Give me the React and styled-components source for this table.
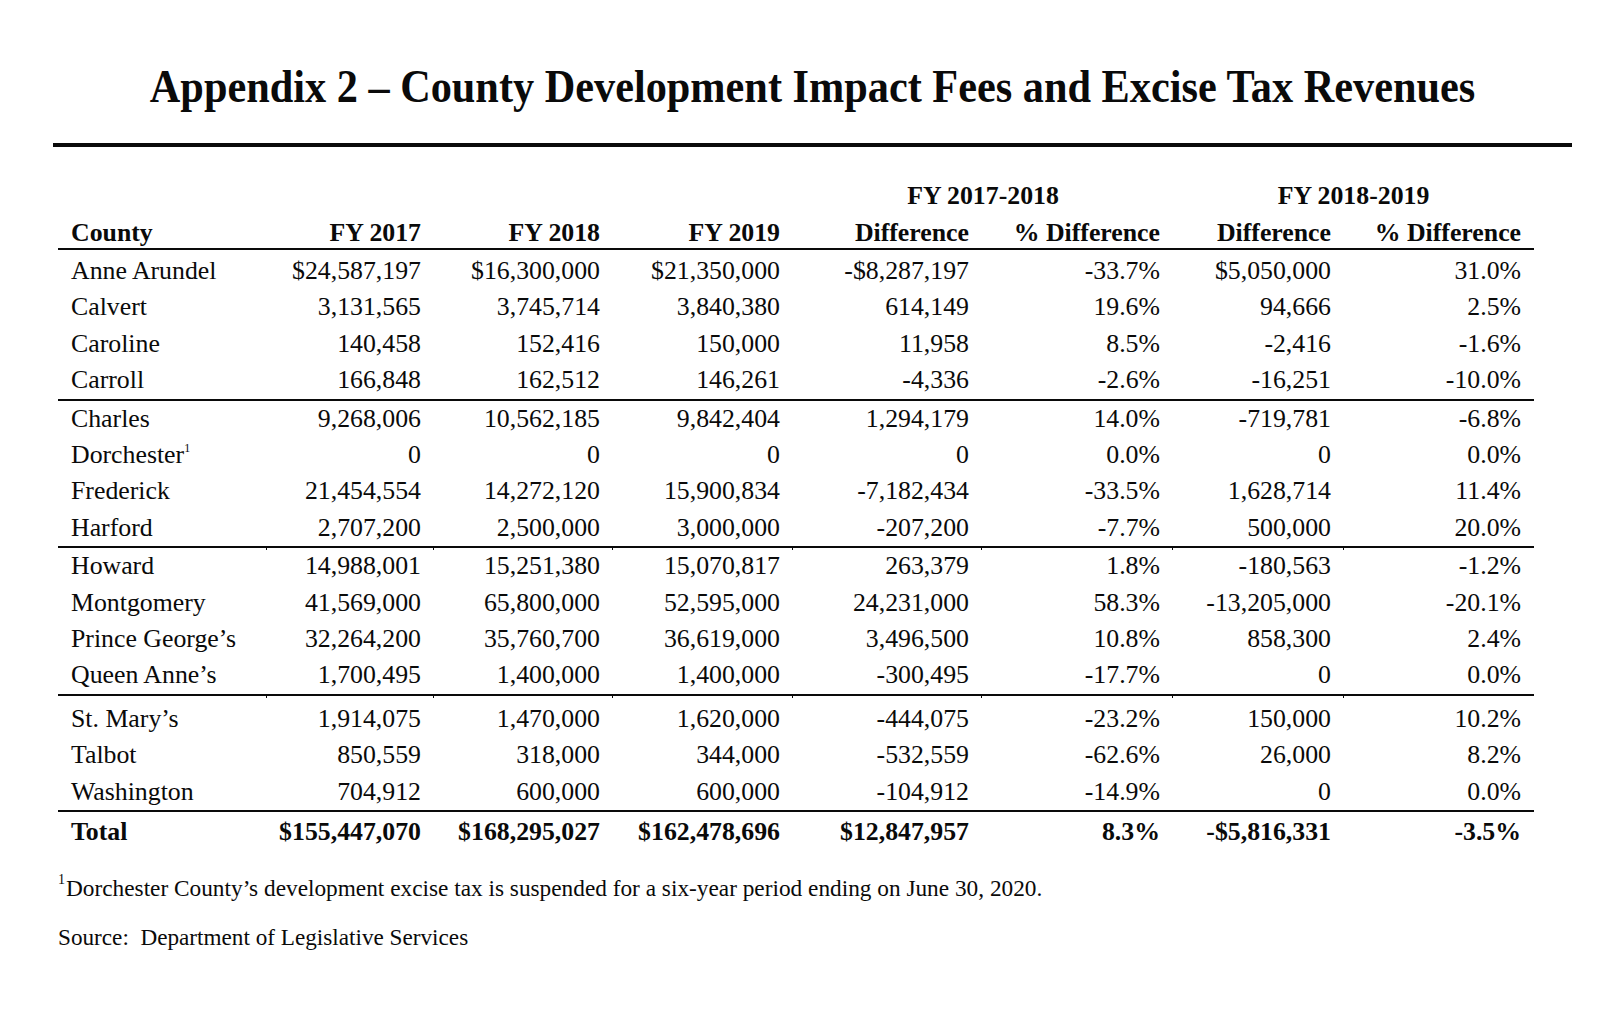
import React from 'react';
import styled, { createGlobalStyle } from 'styled-components';

const GlobalStyle = createGlobalStyle`
  html, body {
    margin: 0;
    padding: 0;
    background: #fff;
  }
  body {
    font-family: "Liberation Serif", "Times New Roman", serif;
    color: #0a0a0a;
  }
`;

const rows = [
  { county: 'Anne Arundel', v: ['$24,587,197', '$16,300,000', '$21,350,000', '-$8,287,197', '-33.7%', '$5,050,000', '31.0%'], first: true },
  { county: 'Calvert', v: ['3,131,565', '3,745,714', '3,840,380', '614,149', '19.6%', '94,666', '2.5%'] },
  { county: 'Caroline', v: ['140,458', '152,416', '150,000', '11,958', '8.5%', '-2,416', '-1.6%'] },
  { county: 'Carroll', v: ['166,848', '162,512', '146,261', '-4,336', '-2.6%', '-16,251', '-10.0%'], rule: true },
  { county: 'Charles', v: ['9,268,006', '10,562,185', '9,842,404', '1,294,179', '14.0%', '-719,781', '-6.8%'] },
  { county: 'Dorchester', note: '1', v: ['0', '0', '0', '0', '0.0%', '0', '0.0%'] },
  { county: 'Frederick', v: ['21,454,554', '14,272,120', '15,900,834', '-7,182,434', '-33.5%', '1,628,714', '11.4%'] },
  { county: 'Harford', v: ['2,707,200', '2,500,000', '3,000,000', '-207,200', '-7.7%', '500,000', '20.0%'], rule: true, ticks: true },
  { county: 'Howard', v: ['14,988,001', '15,251,380', '15,070,817', '263,379', '1.8%', '-180,563', '-1.2%'] },
  { county: 'Montgomery', v: ['41,569,000', '65,800,000', '52,595,000', '24,231,000', '58.3%', '-13,205,000', '-20.1%'] },
  { county: 'Prince George’s', v: ['32,264,200', '35,760,700', '36,619,000', '3,496,500', '10.8%', '858,300', '2.4%'] },
  { county: 'Queen Anne’s', v: ['1,700,495', '1,400,000', '1,400,000', '-300,495', '-17.7%', '0', '0.0%'], rule: true, ticks: true },
  { county: 'St. Mary’s', v: ['1,914,075', '1,470,000', '1,620,000', '-444,075', '-23.2%', '150,000', '10.2%'], gap: true },
  { county: 'Talbot', v: ['850,559', '318,000', '344,000', '-532,559', '-62.6%', '26,000', '8.2%'] },
  { county: 'Washington', v: ['704,912', '600,000', '600,000', '-104,912', '-14.9%', '0', '0.0%'], rule: true },
];

const total = ['$155,447,070', '$168,295,027', '$162,478,696', '$12,847,957', '8.3%', '-$5,816,331', '-3.5%'];

const colWidths = [209, 167, 179, 180, 189, 191, 171, 190];

export default function App() {
  return (
    <Page>
      <GlobalStyle />
      <Title>Appendix 2 – County Development Impact Fees and Excise Tax Revenues</Title>
      <Rule />
      <Table>
        <colgroup>
          {colWidths.map((w, i) => <col key={i} style={{ width: w }} />)}
        </colgroup>
        <thead>
          <tr>
            <GroupHead colSpan={4} />
            <GroupHead colSpan={2}>FY 2017-2018</GroupHead>
            <GroupHead colSpan={2}>FY 2018-2019</GroupHead>
          </tr>
          <tr>
            <ColHead $left>County</ColHead>
            <ColHead>FY 2017</ColHead>
            <ColHead>FY 2018</ColHead>
            <ColHead>FY 2019</ColHead>
            <ColHead>Difference</ColHead>
            <ColHead>% Difference</ColHead>
            <ColHead>Difference</ColHead>
            <ColHead>% Difference</ColHead>
          </tr>
        </thead>
        <tbody>
          {rows.map((r) => (
            <Row key={r.county} $rule={r.rule}>
              <Cell $left $first={r.first} $gap={r.gap} $rule={r.rule} $ticks={r.ticks}>
                {r.county}
                {r.note && <Sup>{r.note}</Sup>}
              </Cell>
              {r.v.map((val, i) => (
                <Cell key={i} $first={r.first} $gap={r.gap} $rule={r.rule} $ticks={r.ticks}>{val}</Cell>
              ))}
            </Row>
          ))}
          <Row>
            <Cell $left $total>Total</Cell>
            {total.map((val, i) => <Cell key={i} $total>{val}</Cell>)}
          </Row>
        </tbody>
      </Table>
      <Footnote>
        <FootSup>1</FootSup>Dorchester County’s development excise tax is suspended for a six-year period ending on June 30, 2020.
      </Footnote>
      <Source>Source:&nbsp; Department of Legislative Services</Source>
    </Page>
  );
}

const Page = styled.div`
  width: 1519px;
  margin-left: 53px;
  padding-top: 66px;
  padding-bottom: 60px;
`;

const Title = styled.h1`
  margin: 0;
  font-family: "Liberation Serif", "Times New Roman", serif;
  font-weight: bold;
  font-size: 42.3px;
  line-height: 42px;
  text-align: center;
  transform: scaleY(1.08);
  white-space: nowrap;
`;

const Rule = styled.div`
  height: 4px;
  margin-top: 35px;
  background: #0a0a0a;
`;

const Table = styled.table`
  width: 1476px;
  margin-left: 5px;
  margin-top: 31px;
  border-collapse: collapse;
  table-layout: fixed;
  font-size: 25.8px;
`;

const GroupHead = styled.th`
  font-weight: bold;
  text-align: center;
  line-height: 36px;
  padding: 0 0 4px;
  white-space: nowrap;
`;

const ColHead = styled.th`
  font-weight: bold;
  text-align: ${(p) => (p.$left ? 'left' : 'right')};
  padding: ${(p) => (p.$left ? '0 0 0 13px' : '0 13px 0 0')};
  line-height: 30px;
  border-bottom: 2px solid #0a0a0a;
  white-space: nowrap;
`;

const Row = styled.tr``;

const Cell = styled.td`
  position: relative;
  font-weight: ${(p) => (p.$total ? 'bold' : 'normal')};
  text-align: ${(p) => (p.$left ? 'left' : 'right')};
  line-height: 36.4px;
  padding-left: ${(p) => (p.$left ? '13px' : '0')};
  padding-right: ${(p) => (p.$left ? '0' : '13px')};
  padding-top: ${(p) => (p.$first ? '3px' : p.$gap ? '5px' : p.$total ? '2px' : '0')};
  padding-bottom: 0;
  white-space: nowrap;
  border-bottom: ${(p) => (p.$rule ? '2px solid #0a0a0a' : 'none')};

  &::after {
    content: '';
    display: ${(p) => (p.$ticks ? 'block' : 'none')};
    position: absolute;
    right: 0;
    bottom: -4px;
    width: 1.5px;
    height: 3px;
    background: #0a0a0a;
  }
  &:last-child::after {
    display: none;
  }
`;

const Sup = styled.sup`
  font-size: 12px;
  line-height: 0;
  vertical-align: 11px;
`;

const Footnote = styled.p`
  margin: 23px 0 0 5px;
  font-size: 23.3px;
  line-height: 28px;
  white-space: nowrap;
`;

const FootSup = styled.span`
  font-size: 14px;
  line-height: 0;
  vertical-align: 12px;
  margin-right: 1px;
`;

const Source = styled.p`
  margin: 21px 0 0 5px;
  font-size: 23.2px;
  line-height: 28px;
  white-space: nowrap;
`;
